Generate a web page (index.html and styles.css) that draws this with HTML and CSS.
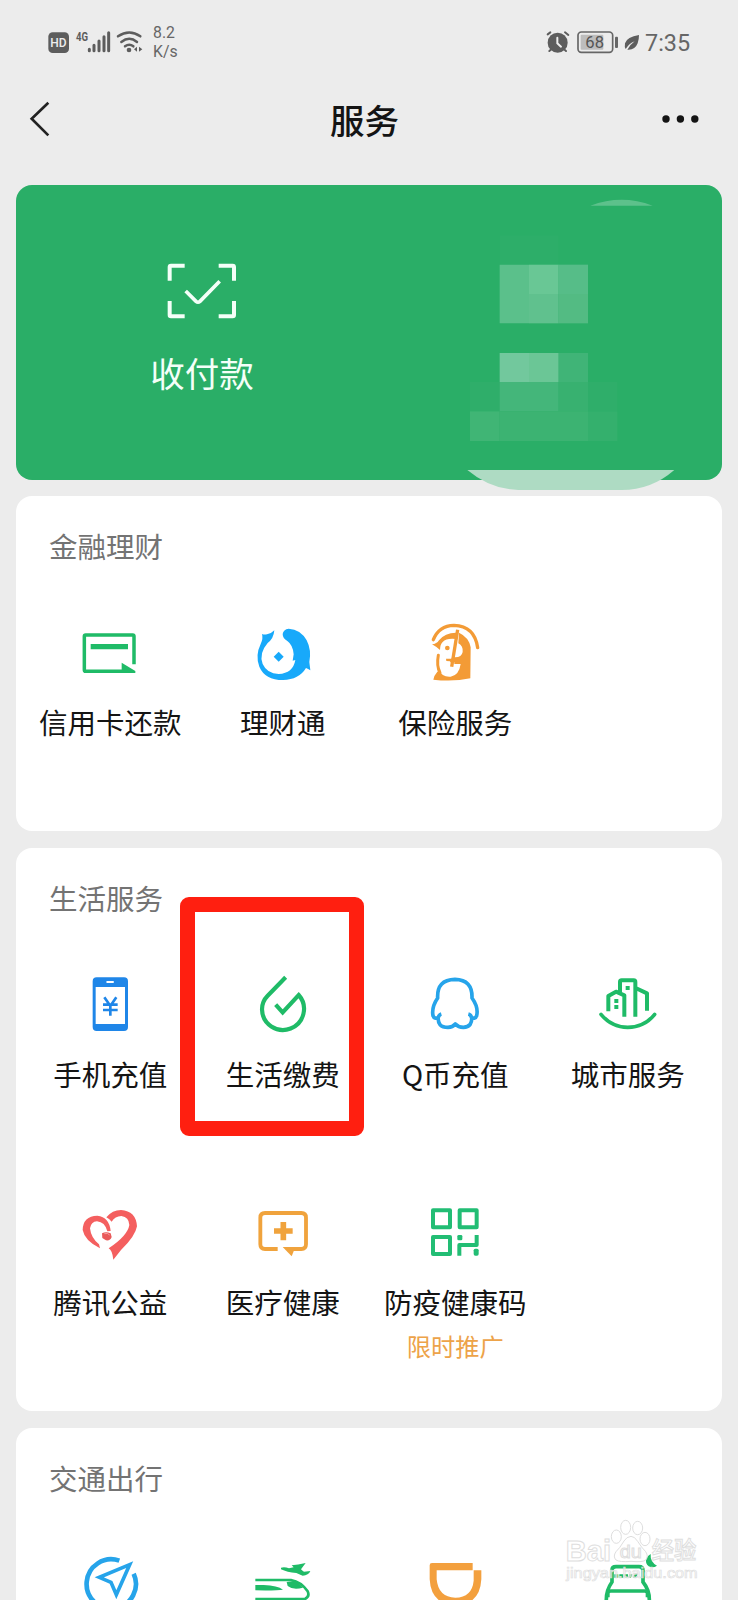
FILE: index.html
```html
<!DOCTYPE html>
<html lang="zh-CN">
<head>
<meta charset="utf-8">
<title>服务</title>
<link rel="stylesheet" href="styles.css">
</head>
<body>
<div class="screen">
  <div class="status">
    <svg class="status-left" viewBox="144 78 288 96">
      <rect x="145" y="97" width="62" height="62" rx="13" fill="#5d5d5d"/>
      <text x="151" y="142" class="hd" textLength="49" lengthAdjust="spacingAndGlyphs">HD</text>
      <text x="228" y="123" class="net" textLength="36" lengthAdjust="spacingAndGlyphs">4G</text>
      <g stroke="#5d5d5d" stroke-width="9" stroke-linecap="round" fill="none">
        <path d="M268 148v4M282 136v16M297 123v29M312 110v42M326 98v54"/>
        <path d="M354 109Q388 86 421 109M364 126Q388 107 411 126M375 139Q388 129 400 139" stroke-width="7.500"/>
      </g>
      <circle cx="387" cy="150" r="7" fill="#5d5d5d"/>
      <path d="M411 140v15l-9-7.500zM417 140v15l10-7.500z" fill="#5d5d5d"/>
    </svg>
    <div class="speed">8.2<br>K/s</div>
    <svg class="status-right" viewBox="528 84 288 84">
      <circle cx="566" cy="128" r="30" fill="#5d5d5d"/>
      <path d="M536 103l8-6M588 97l10 8M541 153l6-5M591 153l-6-5" stroke="#5d5d5d" stroke-width="6" stroke-linecap="round"/>
      <path d="M565 113v17l11 10" stroke="#ededed" stroke-width="6" fill="none" stroke-linecap="round"/>
      <rect x="627" y="96" width="104" height="61" rx="10" fill="none" stroke="#666" stroke-width="5"/>
      <rect x="635" y="104" width="68" height="45" rx="3" fill="#bdbdbd"/>
      <rect x="738" y="110" width="9" height="34" rx="3" fill="#666"/>
      <text x="649" y="144" class="batt" textLength="56" lengthAdjust="spacingAndGlyphs">68</text>
      <path d="M810 105Q774 110 768 130Q766 141 770 147Q780 131 797 124Q782 135 775 149Q798 151 806 130Q810 119 810 105z" fill="#5d5d5d"/>
    </svg>
    <div class="time">7:35</div>
  </div>

  <header class="nav">
    <svg class="back" viewBox="84 300 72 114"><path d="M145 308L95 356L145 406" fill="none" stroke="#222" stroke-width="8"/></svg>
    <h1>服务</h1>
    <svg class="more" viewBox="0 0 37 8"><g fill="#141414"><circle cx="4" cy="4" r="3.700"/><circle cx="18.400" cy="4" r="3.700"/><circle cx="32.800" cy="4" r="3.700"/></g></svg>
  </header>

  <main class="cards">
    <section class="pay">
      <div class="pay-item">
        <svg class="pay-icon" viewBox="112 70 210 168">
          <path d="M165 78H124Q120 78 120 82V123M267 78H309Q313 78 313 82V123M120 184V226Q120 230 124 230H165M267 230H309Q313 230 313 226V184" fill="none" stroke="#f4fff8" stroke-width="12"/>
          <path d="M168 154L199 185Q205 190 211 185L270 125" fill="none" stroke="#f4fff8" stroke-width="11"/>
        </svg>
        <span class="pay-label">收付款</span>
      </div>
      <svg class="mosaic" viewBox="0 0 894 990">
        <path d="M451 77Q545 42 638 77z" fill="#5dc18b"/>
        <path d="M179 166h176v88h-176z" fill="#2dae69"/>
        <path d="M179 254h88v176h-88z" fill="#5bc08b"/>
        <path d="M267 254h89v88h-89z" fill="#69c795"/>
        <path d="M267 342h89v88h-89z" fill="#60c18e"/>
        <path d="M356 254h88v88h-88z" fill="#56bd88"/>
        <path d="M356 342h88v88h-88z" fill="#53bb83"/>
        <path d="M179 519h88v87h-88z" fill="#72c89d"/>
        <path d="M267 519h89v87h-89z" fill="#6bc696"/>
        <path d="M356 519h88v87h-88z" fill="#40b477"/>
        <path d="M90 606h89v88h-89zM444 606h88v88h-88z" fill="#2fae6a"/>
        <path d="M179 606h177v88h-177z" fill="#44b67a"/>
        <path d="M356 606h88v88h-88z" fill="#38b170"/>
        <path d="M90 694h89v89h-89z" fill="#40b575"/>
        <path d="M179 694h265v89h-265z" fill="#3cb372"/>
        <path d="M444 694h88v89h-88z" fill="#34b06d"/>
        <path d="M82 870H703Q634 930 545 930H235Q151 928 82 870z" fill="#aedbc3"/>
      </svg>
    </section>

    <section class="card">
      <h2>金融理财</h2>
      <div class="grid">
        <div class="cell">
          <svg class="icon" viewBox="235 423 192 192">
            <path d="M403 553V469Q403 465 399 465H258Q254 465 254 469V570Q254 574 258 574H380" fill="none" stroke="#1fbb67" stroke-width="10.500"/>
            <path d="M273 492h112v16h-112zM366 548L407 573V579H366z" fill="#1fbb67"/>
          </svg>
          <span class="label">信用卡还款</span>
        </div>
        <div class="cell">
          <svg class="icon" viewBox="752 423 192 192">
            <path d="M822 451Q813 461 800 463Q792 465 785 462Q789 476 781 492Q764 527 777 560Q794 600 848 600Q896 599 917 564Q923 566 930 571L927 546Q934 510 919 481Q901 448 865 446Q849 448 847 462Q847 475 861 483Q878 495 880 523L877 542L885 540Q878 580 835 582Q800 581 787 552Q775 520 802 489Q820 476 822 451z" fill="#18a9fa"/>
            <path d="M835 515l15 15-15 15-15-15z" fill="#18a9fa"/>
          </svg>
          <span class="label">理财通</span>
        </div>
        <div class="cell">
          <svg class="icon" viewBox="160 93 192 192">
            <g fill="none" stroke="#f39b36" stroke-linecap="round">
              <path d="M191 149Q208 107 253 106Q315 108 324 173" stroke-width="10"/>
              <path d="M264 119L246 230" stroke-width="10" stroke-linecap="butt"/>
              <path d="M206 196Q200 228 211 248" stroke-width="9"/>
            </g>
            <path d="M187 163Q201 162 208 151Q226 127 262 128L260 147Q231 143 219 156Q211 164 211 180Q200 170 187 163z" fill="#f39b36"/>
            <path d="M268 128Q298 142 303 172L302 265Q250 276 191 269Q193 257 202 247L209 239Q216 262 243 260Q268 256 273 222H254V217H242L241 214L230 213L229 206H244L254 202Q276 203 279 186Q281 168 266 160z" fill="#f39b36"/>
            <circle cx="233" cy="174" r="7" fill="#f39b36"/>
          </svg>
          <span class="label">保险服务</span>
        </div>
      </div>
    </section>

    <section class="card">
      <h2>生活服务</h2>
      <div class="grid">
        <div class="cell">
          <svg class="icon" viewBox="235 339 192 192">
            <path fill-rule="evenodd" d="M291 352H373Q385 352 385 364V501Q385 513 373 513H291Q279 513 279 501V364Q279 352 291 352zM288 381V492H376V381zM322 363Q317 366 322 369H341Q345 366 341 363z" fill="#1f86e8"/>
            <path d="M314 412L332 438L350 412M332 436V467M310 434H354M310 450H354" fill="none" stroke="#1f86e8" stroke-width="8"/>
          </svg>
          <span class="label">手机充值</span>
        </div>
        <div class="cell">
          <svg class="icon" viewBox="752 339 192 192">
            <path d="M856 352L802 407Q785 424 785 448A63 63 0 1 0 895 405L847 457L826 434" fill="none" stroke="#1fbb67" stroke-width="12.500"/>
          </svg>
          <span class="label">生活缴费</span>
        </div>
        <div class="cell">
          <svg class="icon" viewBox="160 99 192 192">
            <path d="M215 222Q208 224 206 232Q194 239 190 227Q185 202 204 174Q201 119 256 118Q309 119 307 174Q327 202 321 227Q317 239 305 232Q304 224 296 222M206 230Q202 262 235 262Q249 262 257 252Q266 262 281 262Q309 261 306 230" fill="none" stroke="#26a4ea" stroke-width="11" stroke-linejoin="round"/>
          </svg>
          <span class="label">Q币充值</span>
        </div>
        <div class="cell">
          <svg class="icon" viewBox="677 99 192 192">
            <path d="M714 214V168L737 155L762 166V230M749 158V126Q749 121 754 121H790Q795 121 795 126V230M796 144L830 160V212" fill="none" stroke="#1fbb67" stroke-width="12" stroke-linejoin="round"/>
            <path d="M692 223Q724 262 772 262Q822 262 853 223" fill="none" stroke="#1fbb67" stroke-width="11" stroke-linecap="round"/>
            <path d="M732 177h12v12h-12zM732 195h12v12h-12zM766 138h12v12h-12z" fill="#1fbb67"/>
          </svg>
          <span class="label">城市服务</span>
        </div>
        <div class="cell">
          <svg class="icon" viewBox="145 63 192 192">
            <path d="M211 205Q165 182 159 150Q160 108 203 107Q239 111 243 153L233 154Q226 126 202 124Q184 125 181 145Q184 174 208 193z" fill="#f45f5f"/>
            <path d="M230 112Q248 90 274 90Q319 93 322 139Q317 169 274 210L251 239Q248 211 237 205Q294 167 299 135Q298 111 275 108Q256 109 246 125Q240 117 230 112z" fill="#f45f5f"/>
            <path d="M217 160Q229 153 243 160L246 171Q242 183 229 181L218 174z" fill="#e95a5a"/>
            <path d="M224 161Q235 158 240 165" fill="none" stroke="#f7a0a0" stroke-width="3"/>
          </svg>
          <span class="label">腾讯公益</span>
        </div>
        <div class="cell">
          <svg class="icon" viewBox="662 63 192 192">
            <path d="M742 207H704Q690 207 690 193V113Q690 99 704 99H813Q827 99 827 113V193Q827 207 813 207H782" fill="none" stroke="#f0a33d" stroke-width="11.500"/>
            <path d="M757 201H795L784 229z" fill="#f0a33d"/>
            <path d="M759 126V181M731 153H787" stroke="#f0a33d" stroke-width="17"/>
          </svg>
          <span class="label">医疗健康</span>
        </div>
        <div class="cell">
          <svg class="icon" viewBox="190 63 192 192">
            <g fill="none" stroke="#22bd74" stroke-width="12" stroke-linejoin="round">
              <path d="M220 91h51v51h-51zM300 91h51v51h-51zM220 171h51v51h-51z"/>
              <path d="M299 227V195H351V165"/>
            </g>
            <rect x="293" y="165" width="15" height="16" rx="4" fill="#22bd74"/>
            <rect x="342" y="206" width="15" height="21" rx="5" fill="#22bd74"/>
          </svg>
          <span class="label">防疫健康码</span>
          <span class="promo">限时推广</span>
        </div>
      </div>
      <div class="highlight"></div>
    </section>

    <section class="card card-last">
      <h2>交通出行</h2>
      <div class="grid">
        <div class="cell">
          <svg class="icon" viewBox="235 459 192 192">
            <path d="M359 482A74 74 0 1 0 402 521" fill="none" stroke="#26a4ea" stroke-width="14"/>
            <path d="M390 494L299 532L334 547L350 584z" fill="none" stroke="#26a4ea" stroke-width="11"/>
          </svg>
        </div>
        <div class="cell">
          <svg class="icon" viewBox="752 459 192 192">
            <path d="M765 540H872Q902 545 922 574Q929 590 914 597H765" fill="none" stroke="#1fbb67" stroke-width="8"/>
            <path d="M765 555H790Q832 557 848 569Q830 572 765 571zM859 546L885 542Q901 554 908 563Q878 571 862 558z" fill="#1fbb67"/>
            <path d="M842 503Q852 499 866 505L880 502L874 496Q892 494 916 489L902 508Q907 514 911 515L930 513Q925 526 907 527L888 519Q860 517 842 508z" fill="#1fbb67"/>
          </svg>
        </div>
        <div class="cell">
          <svg class="icon" viewBox="163 219 192 192">
            <path d="M312 249V271H204V298Q209 352 260 353Q310 352 315 302V271H338V298Q334 374 260 376Q187 373 183 298V256Q183 249 190 249z" fill="#f3a03e"/>
          </svg>
        </div>
        <div class="cell">
          <svg class="icon" viewBox="680 219 192 192">
            <path d="M711 362Q710 331 728 306V270Q728 260 740 260H809Q821 260 821 272V306Q841 331 840 362" fill="none" stroke="#1fbb67" stroke-width="11"/>
            <path d="M716 352V339Q718 333 724 333H826Q833 333 834 339V352" fill="none" stroke="#1fbb67" stroke-width="10"/>
            <path d="M735 283h12v10h-12zM750 283h12v10h-12zM765 283h11v7l-5 4-6-4zM780 283h9l-4 10h-8zM794 283h11l-5 10h-9z" fill="#1fbb67"/>
            <path d="M844 222Q842 246 863 257Q851 266 838 259Q827 250 831 237Q835 226 844 222z" fill="#1fbb67"/>
          </svg>
        </div>
      </div>
    </section>
  </main>

  <svg class="watermark" viewBox="585 115 408 200">
    <g fill="#fff" fill-opacity=".55" stroke="#dedede" stroke-width="3">
      <ellipse cx="742" cy="171" rx="15" ry="20"/>
      <ellipse cx="770" cy="143" rx="15" ry="21"/>
      <ellipse cx="806" cy="145" rx="15" ry="20"/>
      <ellipse cx="828" cy="178" rx="15" ry="20"/>
      <path d="M786 170Q797 170 806 185Q818 204 830 216Q840 231 829 242Q819 248 786 245Q752 248 741 241Q731 230 741 216Q752 206 765 184Q773 171 786 170z"/>
      <text x="590" y="244" class="wm-brand" textLength="136" lengthAdjust="spacingAndGlyphs">Bai</text>
      <text x="752" y="236" class="wm-du" textLength="66" lengthAdjust="spacingAndGlyphs">du</text>
      <text x="848" y="239" class="wm-cn" textLength="134" lengthAdjust="spacingAndGlyphs">经验</text>
      <text x="592" y="296" class="wm-url" textLength="394" lengthAdjust="spacingAndGlyphs">jingyan.baidu.com</text>
    </g>
  </svg>
</div>
</body>
</html>
```
FILE: styles.css
```css
* { box-sizing: border-box; margin: 0; padding: 0; }

body {
  background: #ececec;
  font-family: "Noto Sans CJK SC", sans-serif;
  color: #141414;
}

.screen {
  position: relative;
  width: 738px;
  height: 1600px;
  overflow: hidden;
}

svg { display: block; flex: none; }

/* Status bar */
.status {
  display: flex;
  align-items: flex-start;
  height: 74px;
  padding: 26px 48px 0;
  color: #666;
  font-family: Roboto, sans-serif;
}
.status-left { width: 96px; height: 32px; }
.speed {
  margin-left: 9px;
  font-size: 15.8px;
  line-height: 18.5px;
  margin-top: -2px;
}
.status-right { width: 96px; height: 28px; margin: 2px 0 0 auto; }
.time { width: 45px; margin: 1px 0 0 4px; font-size: 23.4px; line-height: 32px; white-space: nowrap; }
.hd { font: 500 37px Roboto, sans-serif; fill: #ededed; }
.net { font: 700 39px Roboto, sans-serif; fill: #5d5d5d; }
.batt { font: 400 52px Roboto, sans-serif; fill: #555; }

/* Title bar */
.nav {
  display: flex;
  align-items: center;
  justify-content: space-between;
  height: 111px;
  padding: 0 39px 22px 28px;
}
.back { width: 24px; height: 38px; }
.nav h1 { font-size: 34.5px; line-height: 50px; font-weight: 500; padding-left: 15px; }
.more { width: 37px; height: 8px; }

/* Cards */
.cards { display: flex; flex-direction: column; gap: 17px; padding: 0 16px; }

.pay {
  position: relative;
  height: 295px;
  margin-bottom: -1px;
  padding: 78px 0 0 132px;
  border-radius: 16px;
  background: #2aae67;
}
.pay-item { display: flex; flex-direction: column; align-items: center; width: 108px; }
.pay-icon { width: 70px; height: 56px; }
.pay-label { margin-top: 27.5px; font-size: 34.5px; line-height: 50px; color: #f4fff8; white-space: nowrap; }
.mosaic { position: absolute; left: 424px; top: -5px; width: 298px; height: 330px; z-index: 1; }

.card {
  position: relative;
  border-radius: 16px;
  background: #fff;
}
.card h2 {
  height: 107px;
  padding: 29.5px 33px 0;
  font-size: 28.5px;
  line-height: 40px;
  font-weight: 400;
  color: #737373;
}
.grid { display: grid; grid-template-columns: repeat(4, 1fr); padding: 0 8px; }
.cell {
  display: flex;
  flex-direction: column;
  align-items: center;
  height: 228px;
  padding-top: 18px;
}
.icon { width: 64px; height: 64px; }
.label { margin-top: 16.5px; font-size: 28.5px; line-height: 40px; white-space: nowrap; }
.promo { margin-top: 10px; font-size: 24.3px; line-height: 28px; color: #eda349; }

.highlight {
  position: absolute;
  left: 164px;
  top: 49px;
  width: 183.5px;
  height: 239px;
  border: 15.5px solid #ff1f10;
  border-radius: 9px;
}

/* Watermark */
.watermark { position: absolute; left: 564px; top: 1518.3px; width: 136px; height: 66.7px; }
.wm-brand { font: 700 88px "Liberation Sans", sans-serif; }
.wm-du { font: 400 54px "Liberation Sans", sans-serif; }
.wm-cn { font: 500 70px "Noto Sans CJK SC", sans-serif; }
.wm-url { font: 400 44px "Liberation Sans", sans-serif; stroke-width: 2px; }
```
